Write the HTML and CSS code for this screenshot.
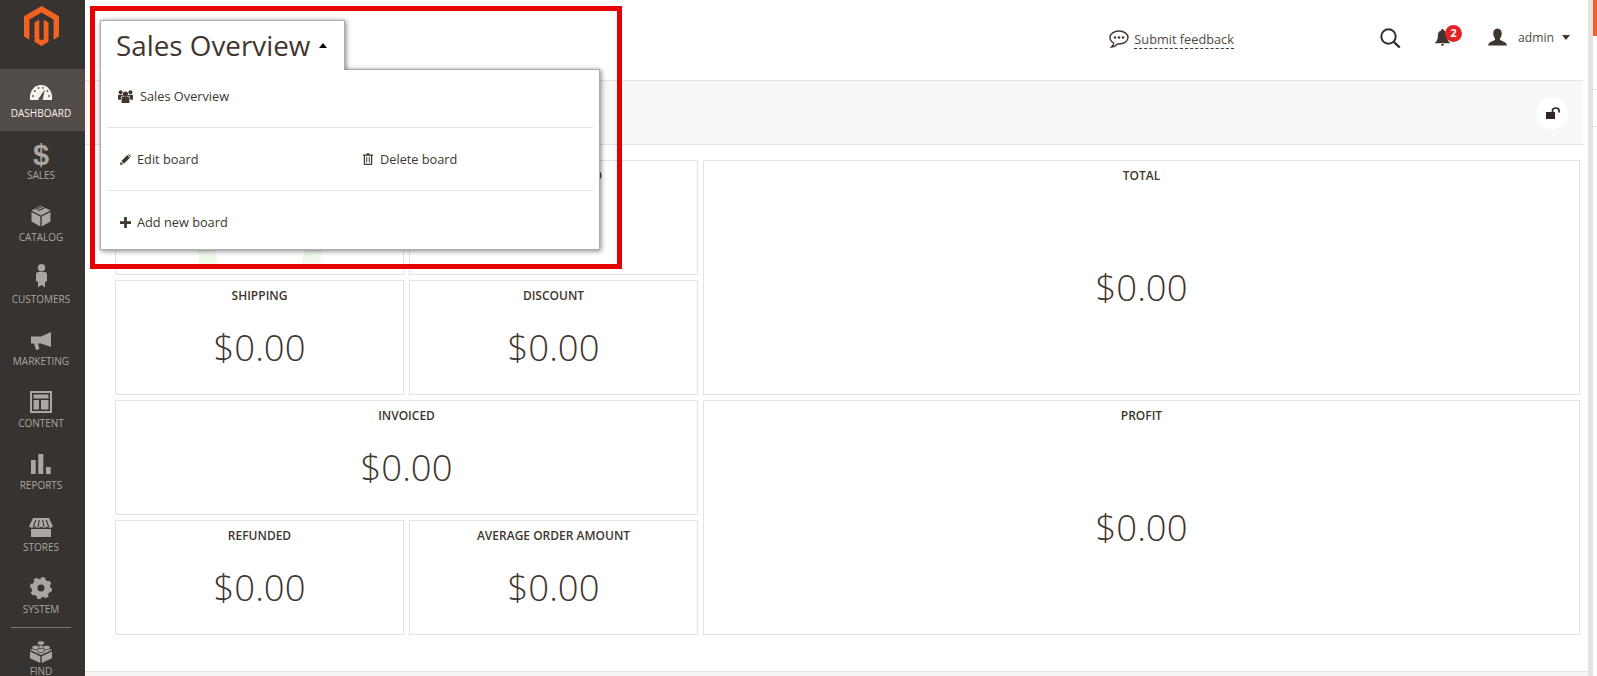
FILE: index.html
```html
<!DOCTYPE html>
<html lang="en">
<head>
<meta charset="utf-8">
<title>Sales Overview</title>
<link rel="stylesheet" href="styles.css">
</head>
<body>
<div class="app">
  <nav class="sidebar">
    <div class="logo">
      <svg class="logo-mark" viewBox="0 0 35 41"><path d="M17.5 0L35 10.2V30.6L29.6 33.7V13.4L17.5 6.4L5.4 13.4V33.7L0 30.6V10.2Z"/><path d="M10.5 16.5L15.3 13.7V33L17.5 34.2L19.7 33V13.7L24.5 16.5V35.8L17.5 40L10.5 35.8Z"/></svg>
    </div>
    <a class="nav-item active">
      <svg class="nav-icon" viewBox="0 0 24 26"><path d="M1 20C0 11 5.500 5 12 5S24 11 23 20Z"/><g class="cut-fill"><circle cx="4" cy="16" r=".9"/><circle cx="5.800" cy="11" r=".9"/><circle cx="9.500" cy="8" r=".9"/><circle cx="14" cy="7.800" r=".9"/><circle cx="20" cy="16" r=".9"/><circle cx="18.500" cy="11" r=".9"/><path d="M9.300 19L15.800 9.500L13.800 19.500A2.500 2.500 0 0 1 9.300 19Z"/></g></svg>
      <span class="nav-label">Dashboard</span>
    </a>
    <a class="nav-item">
      <span class="nav-glyph">$</span>
      <span class="nav-label">Sales</span>
    </a>
    <a class="nav-item">
      <svg class="nav-icon" viewBox="0 0 24 26"><path d="M12 1.500L21.500 6.500L12 11.500L2.500 6.500Z"/><path d="M2.500 8L11.300 12.500V22.500L2.500 17.500Z"/><path d="M12.700 12.500L21.500 8V17.500L12.700 22.500Z"/><path class="cut" d="M6.500 5.500L15.500 1.500M9 6.800L18 2.800"/></svg>
      <span class="nav-label">Catalog</span>
    </a>
    <a class="nav-item">
      <svg class="nav-icon" viewBox="0 0 24 26"><circle cx="12.500" cy="1.700" r="3.700"/><path d="M9.500 6H15.500Q18 6 18 8.500V15L16 16V21.500L12.800 19H12.200L9 21.500V16L7 15V8.500Q7 6 9.500 6Z"/></svg>
      <span class="nav-label">Customers</span>
    </a>
    <a class="nav-item">
      <svg class="nav-icon" viewBox="0 0 24 26"><path d="M22 4V19L12 15.500H9L10.500 21L7 22L5 15.500H2V8.500H12Z"/></svg>
      <span class="nav-label">Marketing</span>
    </a>
    <a class="nav-item">
      <svg class="nav-icon" viewBox="0 0 24 26"><path fill-rule="evenodd" d="M1 1H23V23H1ZM3 3V21H21V3Z"/><path d="M4.500 4.500H19.500V8.500H4.500ZM4.500 10H10V19.500H4.500ZM12 10H19.500V19.500H12Z"/></svg>
      <span class="nav-label">Content</span>
    </a>
    <a class="nav-item">
      <svg class="nav-icon" viewBox="0 0 24 26"><path d="M2 8H6.700V22H2ZM9.300 2H14.300V22H9.300ZM17 15H21.700V22H17Z"/></svg>
      <span class="nav-label">Reports</span>
    </a>
    <a class="nav-item">
      <svg class="nav-icon" viewBox="0 0 24 26"><path d="M4 4H20L24 12.500C22 14 20 14 18 12.800C16 14 14 14 12 12.800C10 14 8 14 6 12.800C4 14 2 14 0 12.500Z"/><path d="M2 15H22V23H2Z"/><path class="cut" d="M6.800 6L4.300 13M10.300 6L9 13M13.700 6L15 13M17.200 6L19.700 13"/></svg>
      <span class="nav-label">Stores</span>
    </a>
    <a class="nav-item">
      <svg class="nav-icon" viewBox="0 0 24 26"><circle class="gear-ring" cx="12" cy="12" r="6.500"/><circle class="gear-teeth" cx="12" cy="12" r="9.700"/></svg>
      <span class="nav-label">System</span>
    </a>
    <a class="nav-item nav-item-rule">
      <svg class="nav-icon" viewBox="0 0 24 26"><path d="M12 7L23 12L12 17L1 12Z"/><path d="M1 13.500L11.300 18.200V25L1 20.200Z"/><path d="M12.700 18.200L23 13.500V20.200L12.700 25Z"/><ellipse class="stud" cx="12" cy="5" rx="3.600" ry="2.200"/><ellipse class="stud" cx="6.500" cy="9.500" rx="3.600" ry="2.200"/><ellipse class="stud" cx="17.500" cy="9.500" rx="3.600" ry="2.200"/><ellipse class="stud" cx="12" cy="12.500" rx="3.600" ry="2.200"/></svg>
      <span class="nav-label">Find</span>
    </a>
  </nav>

  <main class="page">
    <header class="header">
      <a class="feedback">
        <svg class="feedback-icon" viewBox="0 0 20 18"><path class="outline" d="M10 1C5 1 1 3.800 1 7.500C1 9.800 2.500 11.800 4.800 13C4.600 14.500 3.800 15.800 2.500 17C5 16.800 7 15.800 8.500 14C9 14 9.500 14 10 14C15 14 19 11.200 19 7.500S15 1 10 1Z"/><circle cx="6" cy="7.500" r="1.300"/><circle cx="10" cy="7.500" r="1.300"/><circle cx="14" cy="7.500" r="1.300"/></svg>
        <span class="feedback-text">Submit feedback</span>
      </a>
      <svg class="search-icon" viewBox="0 0 21 20"><circle class="search-ring" cx="8.500" cy="8.500" r="7.200"/><path class="search-handle" d="M13.800 13.800L19.800 19.500"/></svg>
      <div class="bell">
        <svg class="bell-icon" viewBox="0 0 16 18"><path d="M8 0C9 0 9.500 .7 9.500 1.500C12 2.300 13 4.500 13 7C13 11 14 12.500 16 14.500V15H0V14.500C2 12.500 3 11 3 7C3 4.500 4 2.300 6.500 1.500C6.500 .7 7 0 8 0Z"/><path d="M6.500 16H9.500C9.500 17 9 18 8 18S6.500 17 6.500 16Z"/></svg>
        <span class="badge">2</span>
      </div>
      <div class="user">
        <svg class="user-icon" viewBox="0 0 20 18"><path d="M10 0C13 0 14.500 2.300 14.500 5C14.500 7.500 13.500 9.500 12.500 10.700C12.500 12 13 12.500 15 13.200C17.500 14 19.500 15 20 18H0C.5 15 2.500 14 5 13.200C7 12.500 7.500 12 7.500 10.700C6.500 9.500 5.500 7.500 5.500 5C5.500 2.300 7 0 10 0Z"/></svg>
        <span class="user-name">admin</span>
        <span class="caret-down"></span>
      </div>
    </header>

    <div class="toolbar">
      <button class="lock">
        <svg class="lock-icon" viewBox="0 0 14 12"><path d="M0 5H9V12H0Z"/><path class="lock-arc" d="M6.500 5V3.500C6.500 1.800 8 1 9.700 1S13 1.800 13 3.500V5.500"/></svg>
      </button>
    </div>

    <section class="board">
      <article class="card">
        <svg class="chart-ghost" viewBox="0 0 124 15"><path d="M0 0H17L20 15H1Z"/><path d="M107 0H124L122 15H103Z"/></svg>
      </article>
      <article class="card">
        <h3 class="card-title">Total invoiced</h3>
      </article>
      <article class="card card-tall">
        <h3 class="card-title">Total</h3>
        <div class="card-value">$0.00</div>
      </article>
      <article class="card">
        <h3 class="card-title">Shipping</h3>
        <div class="card-value">$0.00</div>
      </article>
      <article class="card">
        <h3 class="card-title">Discount</h3>
        <div class="card-value">$0.00</div>
      </article>
      <article class="card card-wide">
        <h3 class="card-title">Invoiced</h3>
        <div class="card-value">$0.00</div>
      </article>
      <article class="card card-tall">
        <h3 class="card-title">Profit</h3>
        <div class="card-value">$0.00</div>
      </article>
      <article class="card">
        <h3 class="card-title">Refunded</h3>
        <div class="card-value">$0.00</div>
      </article>
      <article class="card">
        <h3 class="card-title">Average order amount</h3>
        <div class="card-value">$0.00</div>
      </article>
    </section>

    <footer class="footer"></footer>
  </main>

  <aside class="strip">
    <div class="strip-track"></div>
    <div class="strip-side">
      <div class="strip-accent"></div>
      <div class="strip-line strip-line-a"></div>
      <div class="strip-line strip-line-b"></div>
    </div>
  </aside>

  <div class="annotation"></div>

  <div class="board-menu">
    <div class="menu-tab">
      <span class="menu-title">Sales Overview</span>
      <span class="caret-up"></span>
    </div>
    <div class="menu-panel">
      <div class="menu-row menu-row-first">
        <a class="menu-item">
          <svg class="menu-icon-users" viewBox="0 0 15 13"><circle cx="7.500" cy="4" r="2.600"/><circle cx="2.600" cy="2.300" r="2"/><circle cx="12.400" cy="2.300" r="2"/><path d="M3.600 7.500Q3.600 6.600 4.800 6.600H10.200Q11.400 6.600 11.400 7.500V12.500Q11.400 13 10.500 13H4.500Q3.600 13 3.600 12.500Z"/><path d="M0 5.500Q0 4.700 1 4.700H4.400Q4.800 5.500 5.200 5.800Q3 6 2.900 7.500V9.700H.8Q0 9.700 0 9Z"/><path d="M15 5.500Q15 4.700 14 4.700H10.600Q10.200 5.500 9.800 5.800Q12 6 12.100 7.500V9.700H14.200Q15 9.700 15 9Z"/></svg>
          <span>Sales Overview</span>
        </a>
      </div>
      <div class="menu-row menu-row-split">
        <a class="menu-item menu-item-half">
          <svg class="menu-icon" viewBox="0 0 12 12"><path d="M0 12L.8 8.500L3.500 11.200Z"/><path d="M1.500 7.700L8 1.200L10.800 4L4.300 10.500Z"/><path d="M8.800 .5Q9.500 -.2 10.200 .5L11.500 1.800Q12.200 2.500 11.500 3.200L11.400 3.300L8.700 .6Z"/></svg>
          <span>Edit board</span>
        </a>
        <a class="menu-item menu-item-delete">
          <svg class="menu-icon-trash" viewBox="0 0 10 12"><path fill-rule="evenodd" d="M3.300 1.500L3.800 .3H6.200L6.700 1.500H10V2.700H9.200V11Q9.200 12 8.200 12H1.800Q.8 12 .8 11V2.700H0V1.500ZM2 2.700V10.800H8V2.700ZM3.200 4H4.200V9.500H3.200ZM5.800 4H6.800V9.500H5.800Z"/></svg>
          <span>Delete board</span>
        </a>
      </div>
      <div class="menu-row menu-row-last">
        <a class="menu-item">
          <svg class="menu-icon" viewBox="0 0 12 12"><path d="M4.500 0H7.500V4.500H12V7.500H7.500V12H4.500V7.500H0V4.500H4.500Z"/></svg>
          <span>Add new board</span>
        </a>
      </div>
    </div>
  </div>
</div>
</body>
</html>
```

FILE: styles.css
```css
* {
  box-sizing: border-box;
}

html,
body {
  margin: 0;
  height: 100%;
  overflow: hidden;
  background: #fff;
}

body {
  font-family: "Open Sans", "Liberation Sans", sans-serif;
  color: #41362f;
}

.app {
  position: relative;
  display: flex;
  height: 676px;
  overflow: hidden;
}

/* Sidebar */
.sidebar {
  flex: 0 0 85px;
  background: #373330;
  height: 100%;
  overflow: hidden;
  padding-right: 3px;
}

.logo {
  height: 69px;
  display: flex;
  justify-content: center;
  padding-top: 6px;
}

.logo-mark {
  width: 35px;
  height: 41px;
  fill: #f26322;
}

.nav-item {
  display: flex;
  flex-direction: column;
  align-items: center;
  height: 62px;
  padding-top: 11px;
  color: #aaa6a0;
  fill: #aaa6a0;
}

.nav-item.active {
  color: #f7f3eb;
  fill: #f7f3eb;
  background: #524d49;
  margin-right: -3px;
  padding-right: 3px;
}

.nav-item-rule::before {
  content: "";
  display: block;
  height: 1px;
  background: #7a7570;
  align-self: stretch;
  margin: -11px 11px 10px;
}

.nav-icon {
  width: 24px;
  height: 26px;
  flex: none;
  overflow: visible;
}

.nav-glyph {
  height: 26px;
  font-family: "Liberation Sans", sans-serif;
  font-weight: 700;
  font-size: 29px;
  line-height: 26px;
  flex: none;
}

.nav-label {
  font-size: 10px;
  line-height: 14px;
  text-transform: uppercase;
  white-space: nowrap;
}

.cut-fill {
  fill: #524d49;
}

.cut {
  fill: none;
  stroke: #373330;
  stroke-width: 1.100;
}

.gear-ring {
  fill: none;
  stroke: #aaa6a0;
  stroke-width: 6;
}

.gear-teeth {
  fill: none;
  stroke: #aaa6a0;
  stroke-width: 2.800;
  stroke-dasharray: 3.900 3.720;
}

.stud {
  stroke: #373330;
  stroke-width: .7;
}

/* Page */
.page {
  flex: 1 1 auto;
  min-width: 0;
  display: flex;
  flex-direction: column;
}

.header {
  flex: 0 0 80px;
  display: flex;
  align-items: center;
  justify-content: flex-end;
  margin-right: 5px;
  padding: 0 13px 5px 0;
  font-size: 12.750px;
}

.feedback {
  display: flex;
  align-items: center;
  gap: 5px;
  margin-right: 146px;
  margin-top: 3px;
}

.feedback-icon {
  width: 20px;
  height: 18px;
  fill: #41362f;
  margin-top: -1px;
}

.outline {
  fill: none;
  stroke: #41362f;
  stroke-width: 1.400;
}

.feedback-text {
  border-bottom: 1px dashed #41362f;
  line-height: 18px;
  color: #514943;
}

.search-icon {
  width: 21px;
  height: 20px;
  margin-right: 34px;
}

.search-ring,
.search-handle {
  fill: none;
  stroke: #303030;
  stroke-width: 2;
}

.search-handle {
  stroke-width: 2.400;
}

.bell {
  position: relative;
  width: 15px;
  height: 17px;
  margin-right: 38px;
}

.bell-icon {
  display: block;
  width: 15px;
  height: 17px;
  fill: #41362f;
}

.badge {
  position: absolute;
  left: 10px;
  top: -4px;
  width: 17px;
  height: 17px;
  border-radius: 50%;
  background: #e22626;
  color: #fff;
  font-size: 10.500px;
  font-weight: 700;
  line-height: 17px;
  text-align: center;
}

.user {
  display: flex;
  align-items: center;
}

.user-icon {
  width: 19px;
  height: 18px;
  fill: #41362f;
  margin-right: 11px;
  margin-top: -1px;
}

.user-name {
  font-size: 12.200px;
  color: #514943;
  margin-right: 8px;
}

.caret-down {
  width: 0;
  height: 0;
  border-left: 4px solid transparent;
  border-right: 4px solid transparent;
  border-top: 5px solid #41362f;
}

.toolbar {
  flex: 0 0 65px;
  display: flex;
  align-items: center;
  justify-content: flex-end;
  margin-right: 5px;
  padding-right: 15px;
  background: #f8f8f8;
  border-top: 1px solid #e3e3e3;
  border-bottom: 1px solid #e3e3e3;
}

.lock {
  width: 32px;
  height: 32px;
  border: 0;
  padding: 0 0 0 1px;
  border-radius: 50%;
  background: #fff;
  display: flex;
  align-items: center;
  justify-content: center;
}

.lock-icon {
  width: 14px;
  height: 12px;
  fill: #2f2622;
}

.lock-arc {
  fill: none;
  stroke: #2f2622;
  stroke-width: 1.700;
}

/* Board grid */
.board {
  display: grid;
  grid-template-columns: 289px 289px 877px;
  grid-auto-rows: 115px;
  gap: 5px;
  margin: 15px 8px 0 30px;
}

.card {
  position: relative;
  display: flex;
  flex-direction: column;
  border: 1px solid #e3e3e3;
  background: #fff;
  text-align: center;
}

.card-tall {
  grid-row: span 2;
}

.card-wide {
  grid-column: span 2;
}

.card-title {
  margin: 0;
  padding-top: 6px;
  font-size: 12px;
  line-height: 18px;
  font-weight: 600;
  text-transform: uppercase;
  color: #41362f;
}

.card-value {
  flex: 1;
  display: flex;
  align-items: center;
  justify-content: center;
  padding-bottom: 5px;
  font-size: 36.500px;
  font-weight: 300;
  color: #41362f;
}

.chart-ghost {
  position: absolute;
  left: 82px;
  top: 88px;
  width: 124px;
  height: 15px;
  fill: #f1f8ec;
}

.footer {
  margin-top: auto;
  height: 5px;
  background: #f5f5f5;
  border-top: 1px solid #e3e3e3;
}

/* Right strip */
.strip {
  flex: 0 0 9px;
  display: flex;
}

.strip-track {
  flex: 0 0 5px;
  background: #e3e3e3;
}

.strip-side {
  flex: 1;
}

.strip-accent {
  height: 36px;
  background: #f26322;
}

.strip-line {
  height: 1px;
  background: #e3e3e3;
}

.strip-line-a {
  margin-top: 53px;
}

.strip-line-b {
  margin-top: 36px;
}

/* Overlays */
.annotation {
  position: absolute;
  left: 90px;
  top: 6px;
  width: 532px;
  height: 263px;
  border: 5px solid #e60000;
  pointer-events: none;
}

.board-menu {
  position: absolute;
  left: 100px;
  top: 20px;
  width: 500px;
}

.menu-tab {
  position: relative;
  z-index: 2;
  display: flex;
  align-items: center;
  width: 245px;
  height: 50px;
  margin-bottom: -1px;
  padding: 0 0 1px 15px;
  background: #fff;
  border: 1px solid #adadad;
  border-bottom: 0;
  box-shadow: 1px 1px 5px rgba(0, 0, 0, .5);
  clip-path: inset(-10px -10px 0 -10px);
}

.menu-title {
  font-size: 27.800px;
  line-height: 36px;
  color: #41362f;
  white-space: nowrap;
}

.caret-up {
  width: 0;
  height: 0;
  margin-left: 9px;
  border-left: 4px solid transparent;
  border-right: 4px solid transparent;
  border-bottom: 5px solid #000;
}

.menu-panel {
  height: 181px;
  padding: 0 6px;
  background: #fff;
  border: 1px solid #adadad;
  box-shadow: 1px 1px 5px rgba(0, 0, 0, .5);
}

.menu-row {
  display: flex;
  align-items: center;
  padding-left: 13px;
  font-size: 12.750px;
  color: #41362f;
  border-bottom: 1px solid #e3e3e3;
}

.menu-row-first {
  height: 58px;
  padding-bottom: 5px;
}

.menu-row-split {
  height: 63px;
}

.menu-row-last {
  height: 58px;
  padding-top: 4px;
  border-bottom: 0;
}

.menu-item {
  display: flex;
  align-items: center;
  gap: 6px;
}

.menu-item-half {
  width: 243px;
}

.menu-item-delete {
  gap: 7px;
}

.menu-icon {
  width: 11px;
  height: 11px;
  fill: #41362f;
}

.menu-icon-users {
  width: 15px;
  height: 13px;
  fill: #41362f;
  margin: 0 1px 0 -2px;
  flex: none;
}

.menu-icon-trash {
  width: 10px;
  height: 12px;
  fill: #41362f;
}
```
